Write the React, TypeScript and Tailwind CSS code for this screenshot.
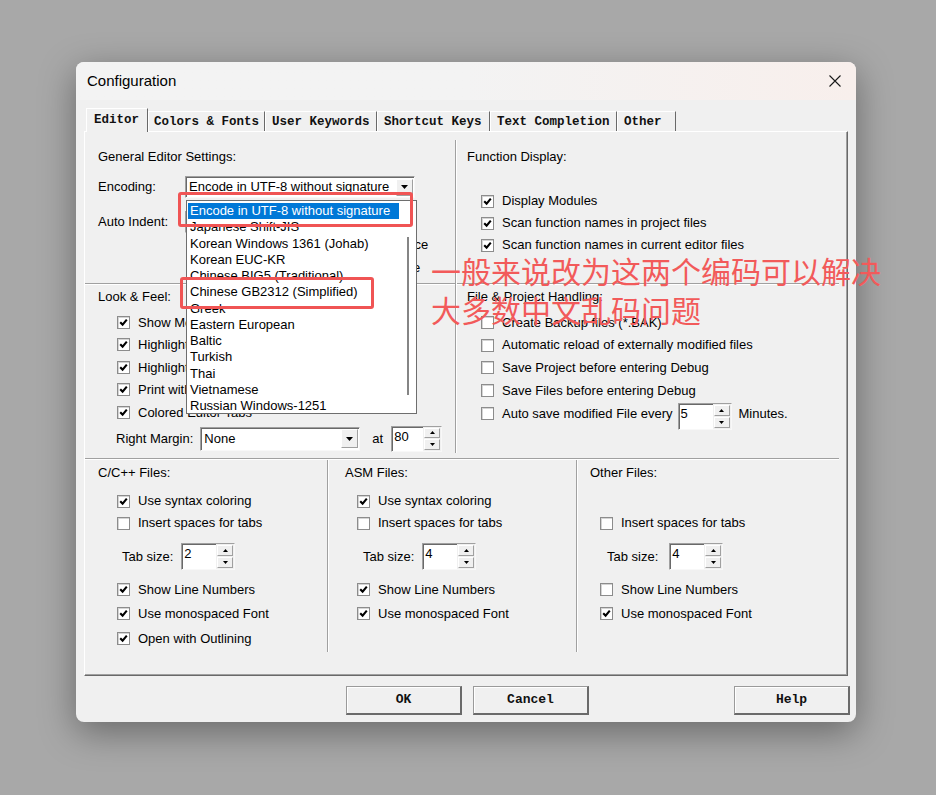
import React from "react";

// Configuration dialog, Editor tab, with the encoding list dropped open.

const tabs = [
  { label: "Editor", cls: "w-[62px] pl-[7px]", active: true },
  { label: "Colors & Fonts", cls: "w-[117px] pl-[5px]" },
  { label: "User Keywords", cls: "w-[112px] pl-[6px]" },
  { label: "Shortcut Keys", cls: "w-[113px] pl-[6px]" },
  { label: "Text Completion", cls: "w-[127px] pl-[6px]" },
  { label: "Other", cls: "w-[59px] pl-[6px]" },
];

const encodings = [
  "Encode in UTF-8 without signature",
  "Japanese Shift-JIS",
  "Korean Windows 1361 (Johab)",
  "Korean EUC-KR",
  "Chinese BIG5 (Traditional)",
  "Chinese GB2312 (Simplified)",
  "Greek",
  "Eastern European",
  "Baltic",
  "Turkish",
  "Thai",
  "Vietnamese",
  "Russian Windows-1251",
];

function Check({ on }: { on?: boolean }) {
  return (
    <span className="flex h-[13px] w-[13px] shrink-0 items-center justify-center border border-[#8c8c8c] bg-white shadow-[inset_1px_1px_0_#d4d4d4]">
      {on && (
        <svg width="9" height="9" viewBox="0 0 9 9">
          <path d="M1.2 4.2 L3.6 6.6 L7.8 1.6" fill="none" stroke="#000" strokeWidth="2.1" />
        </svg>
      )}
    </span>
  );
}

function CheckRow({ on, label, h = "h-[22px]", hidden }: { on?: boolean; label: string; h?: string; hidden?: boolean }) {
  return (
    <div className={`flex items-center gap-[8px] ${h} ${hidden ? "invisible" : ""}`}>
      <Check on={on} />
      <span className="whitespace-nowrap">{label}</span>
    </div>
  );
}

function Arrow() {
  return (
    <svg width="7" height="4" viewBox="0 0 7 4">
      <path d="M0 0 L7 0 L3.5 4 Z" fill="#000" />
    </svg>
  );
}

function Spin({ value, cls = "w-[54px] h-[27px]" }: { value: string; cls?: string }) {
  return (
    <div className={`flex shrink-0 border border-[#a0a0a0] border-b-[#f8f8f8] border-r-[#f8f8f8] bg-white ${cls}`}>
      <div className="flex-1 pl-[2px] pt-[2px] leading-[16px] shadow-[inset_1px_1px_0_#696969]">{value}</div>
      <div className="flex w-[18px] flex-col gap-[1px] bg-[#f0f0f0] p-[1px]">
        <span className="flex flex-1 items-center justify-center border border-[#a0a0a0] border-l-white border-t-white">
          <svg width="5" height="3" viewBox="0 0 5 3"><path d="M0 3 L2.5 0 L5 3 Z" fill="#000" /></svg>
        </span>
        <span className="flex flex-1 items-center justify-center border border-[#a0a0a0] border-l-white border-t-white">
          <svg width="5" height="3" viewBox="0 0 5 3"><path d="M0 0 L5 0 L2.5 3 Z" fill="#000" /></svg>
        </span>
      </div>
    </div>
  );
}

function Combo({ value, cls }: { value: string; cls: string }) {
  return (
    <div className={`flex shrink-0 items-center border border-[#a0a0a0] border-b-[#f8f8f8] border-r-[#f8f8f8] bg-white shadow-[inset_1px_1px_0_#696969] ${cls}`}>
      <span className="flex-1 overflow-hidden whitespace-nowrap pl-[3px]">{value}</span>
      <span className="mr-[1px] flex h-[calc(100%-3px)] w-[17px] items-center justify-center border border-[#a0a0a0] border-l-white border-t-white bg-[#f0f0f0]">
        <Arrow />
      </span>
    </div>
  );
}

function VLine({ cls }: { cls: string }) {
  return <div className={`w-[2px] shrink-0 border-l border-r border-l-[#a0a0a0] border-r-white ${cls}`} />;
}

function HLine({ cls = "" }: { cls?: string }) {
  return <div className={`h-[2px] shrink-0 border-t border-b border-t-[#a0a0a0] border-b-white ${cls}`} />;
}

function Button({ label }: { label: string }) {
  return (
    <button className="h-[29px] w-[116px] border border-[#9a9a9a] border-b-2 border-r-2 border-b-[#6a6a6a] border-r-[#6a6a6a] bg-[#f0f0f0] font-['Liberation_Mono','Courier_New',monospace] text-[13px] font-bold text-[#111] shadow-[inset_1px_1px_0_#fff]">
      {label}
    </button>
  );
}

function FileColumn({
  title, pl, boxMl, tabMl, spinMl, tab, syntax, lines, mono, outlining,
}: {
  title: string; pl: string; boxMl: string; tabMl: string; spinMl: string; tab: string;
  syntax?: boolean; lines: boolean; mono: boolean; outlining?: boolean;
}) {
  return (
    <div className={`flex flex-col pt-[5px] ${pl}`}>
      <div className="h-[16px] leading-[16px]">{title}</div>
      <div className={`mt-[9px] ${boxMl}`}>
        <CheckRow on label="Use syntax coloring" hidden={syntax === undefined} />
        <CheckRow label="Insert spaces for tabs" />
      </div>
      <div className={`mt-[9px] flex items-center ${tabMl}`}>
        <span>Tab size:</span>
        <div className={spinMl}>
          <Spin value={tab} />
        </div>
      </div>
      <div className={`mt-[7px] ${boxMl}`}>
        <CheckRow on={lines} label="Show Line Numbers" h="h-[24.5px]" />
        <CheckRow on={mono} label="Use monospaced Font" h="h-[24.5px]" />
        {outlining && <CheckRow on label="Open with Outlining" h="h-[24.5px]" />}
      </div>
    </div>
  );
}

export default function App() {
  return (
    <div className="relative h-[795px] w-[936px] overflow-hidden bg-[#a8a8a8] pl-[76px] pt-[62px] font-['Liberation_Sans',Arial,sans-serif] text-[13px] text-black">
      <div className="flex h-[660px] w-[780px] flex-col overflow-hidden rounded-[8px] bg-[#f0f0f0] shadow-[0_10px_36px_rgba(0,0,0,0.38)]">
        {/* title bar */}
        <div className="flex h-[38px] shrink-0 items-center justify-between bg-gradient-to-r from-[#f3f3f3] via-[#f3f3f3] to-[#f8efec] pl-[11px] pr-[15px]">
          <span className="text-[15px] leading-[20px]">Configuration</span>
          <svg width="12" height="12" viewBox="0 0 12 12">
            <path d="M0.5 0.5 L11.5 11.5 M11.5 0.5 L0.5 11.5" stroke="#1a1a1a" strokeWidth="1.1" />
          </svg>
        </div>

        {/* tab strip */}
        <div className="flex h-[31px] shrink-0 items-end pl-[10px] font-['Liberation_Mono','Courier_New',monospace] text-[12.5px] font-bold text-[#111]">
          {tabs.map((t) => (
            <div
              key={t.label}
              className={`whitespace-nowrap border-l border-t border-l-white border-t-white border-r border-r-[#696969] ${t.cls} ${
                t.active
                  ? "relative z-10 -mb-px h-[24px] bg-[#f0f0f0] pt-[2px] leading-[18px]"
                  : "h-[20px] leading-[20px]"
              }`}
            >
              {t.label}
            </div>
          ))}
        </div>

        {/* tab page */}
        <div className="relative mx-[8px] flex h-[545px] shrink-0 flex-col border border-l-white border-t-white border-b-[#696969] border-r-[#696969] shadow-[inset_-1px_-1px_0_#a0a0a0]">
          <div className="flex h-[326px] shrink-0">
            {/* left column */}
            <div className="flex w-[370px] shrink-0 flex-col">
              <div className="h-[151px] shrink-0 pl-[13px] pt-[17px]">
                <div className="h-[16px] leading-[16px]">General Editor Settings:</div>
                <div className="mt-[11px] flex h-[22px] items-center">
                  <span className="w-[87px]">Encoding:</span>
                  <Combo value="Encode in UTF-8 without signature" cls="h-[22px] w-[230px]" />
                </div>
                <div className="mt-[13px] flex">
                  <div className="flex h-[22px] items-center">
                    <span className="w-[87px]">Auto Indent:</span>
                    <Combo value="Smart" cls="h-[22px] w-[100px]" />
                  </div>
                  <div className="ml-[17px]">
                    <CheckRow on label="Virtual Spaces" h="h-[22.5px]" />
                    <CheckRow label="View White Space" h="h-[22.5px]" />
                    <CheckRow label="View End of Line" h="h-[22.5px]" />
                  </div>
                </div>
              </div>
              <HLine />
              <div className="flex-1 pl-[13px] pt-[4px]">
                <div className="h-[16px] leading-[16px]">Look &amp; Feel:</div>
                <div className="ml-[19px] mt-[6px]">
                  <CheckRow on label="Show Message Dialogs" h="h-[22.5px]" />
                  <CheckRow on label="Highlight Current Line" h="h-[22.5px]" />
                  <CheckRow on label="Highlight matching Braces" h="h-[22.5px]" />
                  <CheckRow on label="Print with syntax coloring" h="h-[22.5px]" />
                  <CheckRow on label="Colored Editor Tabs" h="h-[22.5px]" />
                </div>
                <div className="ml-[18px] mt-[2px] flex h-[26px] items-center">
                  <span>Right Margin:</span>
                  <Combo value="None" cls="ml-[7px] h-[24px] w-[160px]" />
                  <span className="ml-[12px]">at</span>
                  <div className="ml-[8px]">
                    <Spin value="80" cls="w-[51px] h-[26px]" />
                  </div>
                </div>
              </div>
            </div>

            <VLine cls="mt-[8px] mb-[5px]" />

            {/* right column */}
            <div className="flex flex-1 flex-col">
              <div className="h-[151px] shrink-0 pl-[10px] pt-[17px]">
                <div className="h-[16px] leading-[16px]">Function Display:</div>
                <div className="ml-[14px] mt-[25px]">
                  <CheckRow on label="Display Modules" />
                  <CheckRow on label="Scan function names in project files" />
                  <CheckRow on label="Scan function names in current editor files" />
                </div>
              </div>
              <HLine cls="mr-[8px]" />
              <div className="flex-1 pl-[10px] pt-[4px]">
                <div className="h-[16px] leading-[16px]">File &amp; Project Handling:</div>
                <div className="ml-[14px] mt-[6px]">
                  <CheckRow label="Create Backup files (*.BAK)" h="h-[22.75px]" />
                  <CheckRow label="Automatic reload of externally modified files" h="h-[22.75px]" />
                  <CheckRow label="Save Project before entering Debug" h="h-[22.75px]" />
                  <CheckRow label="Save Files before entering Debug" h="h-[22.75px]" />
                  <div className="flex h-[22.75px] items-center gap-[8px]">
                    <Check />
                    <span className="whitespace-nowrap">Auto save modified File every</span>
                    <div className="ml-[-3px] mt-[7px]">
                      <Spin value="5" />
                    </div>
                    <span className="ml-[-1px]">Minutes.</span>
                  </div>
                </div>
              </div>
            </div>
          </div>

          <HLine cls="mr-[8px]" />

          {/* file type columns */}
          <div className="flex flex-1">
            <div className="w-[242px] shrink-0">
              <FileColumn title="C/C++ Files:" pl="pl-[13px]" boxMl="ml-[19px]" tabMl="ml-[24px]" spinMl="ml-[8px]" tab="2" syntax lines mono outlining />
            </div>
            <VLine cls="h-[192px]" />
            <div className="w-[247px] shrink-0">
              <FileColumn title="ASM Files:" pl="pl-[16px]" boxMl="ml-[12px]" tabMl="ml-[18px]" spinMl="ml-[8px]" tab="4" syntax lines mono />
            </div>
            <VLine cls="h-[192px]" />
            <div className="flex-1">
              <FileColumn title="Other Files:" pl="pl-[12px]" boxMl="ml-[10px]" tabMl="ml-[17px]" spinMl="ml-[11px]" tab="4" lines={false} mono />
            </div>
          </div>

          {/* open encoding list */}
          <div className="absolute left-[101px] top-[68px] flex h-[214px] w-[231px] border border-[#6e6e6e] bg-white pt-[2px]">
            <div className="w-[212px] pl-[1px]">
              {encodings.map((e, i) => (
                <div
                  key={e}
                  className={`h-[16.25px] whitespace-nowrap pl-[2px] leading-[16px] ${i === 0 ? "bg-[#0078d7] text-white" : ""}`}
                >
                  {e}
                </div>
              ))}
            </div>
            <div className="flex flex-1 justify-center pt-[34px]">
              <div className="h-[158px] w-[2px] bg-[#858585]" />
            </div>
          </div>

          {/* highlight boxes */}
          <div className="absolute left-[93px] top-[60px] h-[35px] w-[235px] rounded-[3px] border-[3px] border-[#f05454]" />
          <div className="absolute left-[95px] top-[145px] h-[32px] w-[194px] rounded-[3px] border-[3px] border-[#f05454]" />
        </div>

        {/* buttons */}
        <div className="flex flex-1 items-start pl-[270px] pr-[6px] pt-[10px]">
          <Button label="OK" />
          <div className="ml-[11px]">
            <Button label="Cancel" />
          </div>
          <div className="ml-auto">
            <Button label="Help" />
          </div>
        </div>
      </div>

      <div className="absolute left-[431px] top-[251px] font-['Noto_Sans_CJK_SC',sans-serif] text-[30px] leading-[39px] text-[#f25a5a]">
        <div>一般来说改为这两个编码可以解决</div>
        <div>大多数中文乱码问题</div>
      </div>
    </div>
  );
}
